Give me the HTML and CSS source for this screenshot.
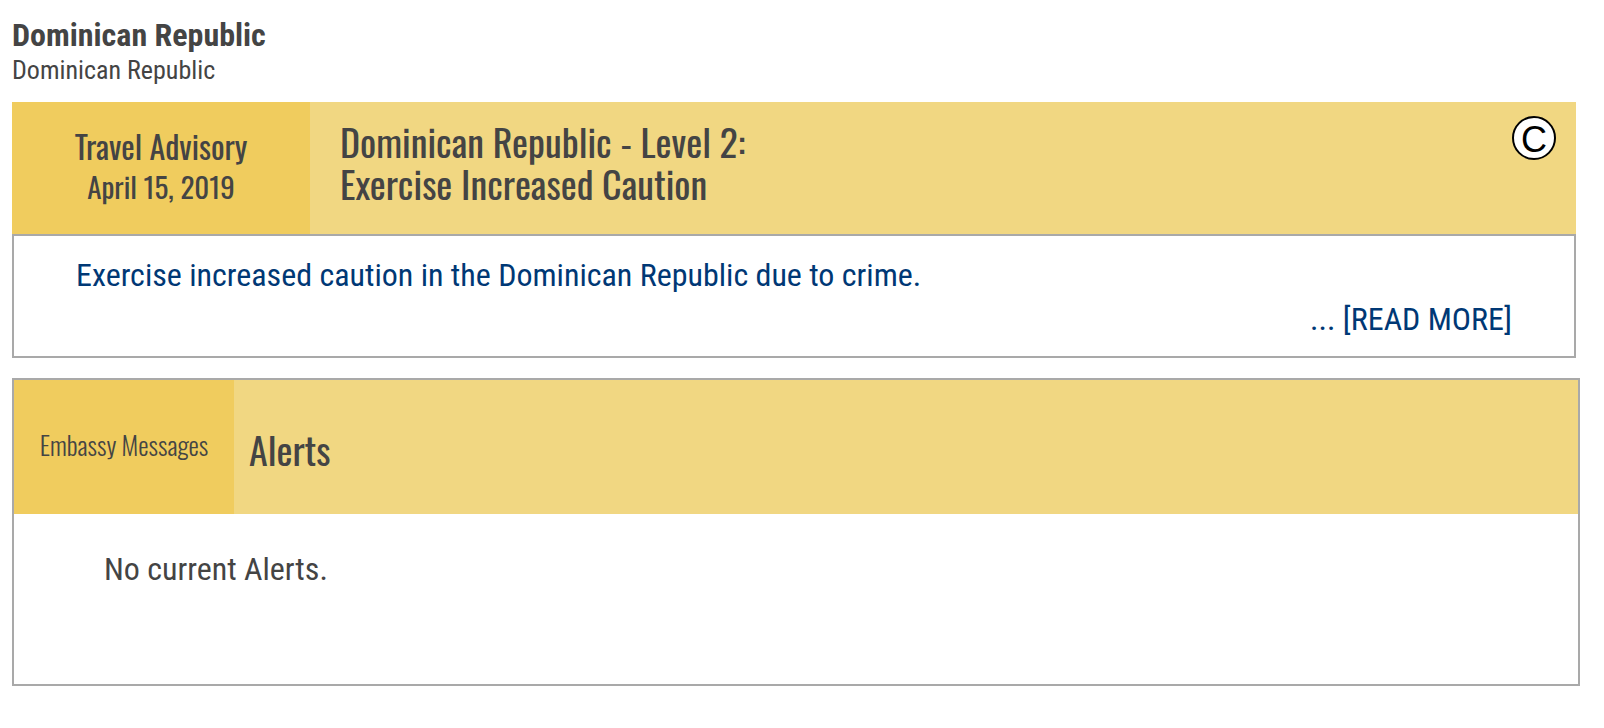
FILE: index.html
```html
<!DOCTYPE html>
<html lang="en">
<head>
  <meta charset="UTF-8" />
  <meta name="viewport" content="width=device-width, initial-scale=1.0" />
  <title>Dominican Republic</title>
  <link rel="stylesheet" href="styles.css">
</head>
<body>
  <header class="country">
    <h1 class="country-name">Dominican Republic</h1>
    <p class="country-full">Dominican Republic</p>
  </header>

  <section class="advisory">
    <div class="banner">
      <div class="banner-label advisory-label">
        <span class="advisory-type">Travel Advisory</span>
        <span class="advisory-date">April 15, 2019</span>
      </div>
      <h2 class="banner-title advisory-title">Dominican Republic - Level 2:<br>Exercise Increased Caution</h2>
      <button class="risk" type="button">C</button>
    </div>
    <div class="advisory-body">
      <a href="#advisory">Exercise increased caution in the Dominican Republic due to crime.</a>
      <a class="read-more" href="#advisory">... [READ MORE]</a>
    </div>
  </section>

  <section class="alerts">
    <div class="banner">
      <div class="banner-label alerts-label">Embassy Messages</div>
      <h2 class="banner-title alerts-title">Alerts</h2>
    </div>
    <p class="alerts-body">No current Alerts.</p>
  </section>
</body>
</html>
```

FILE: styles.css
```css
* {
  box-sizing: border-box;
}

body {
  margin: 0;
  padding: 16px 24px 42px 12px;
  background: #fff;
  color: #444;
  font-family: "Roboto Condensed", "Liberation Sans Narrow", Roboto, sans-serif;
  font-size: 32px;
  line-height: 44px;
}

h1,
h2,
p {
  margin: 0;
}

a {
  color: #003875;
  text-decoration: none;
}

.country {
  margin-bottom: 16px;
}

.country-name {
  font-size: 32px;
  line-height: 38px;
}

.country-full {
  font-size: 26px;
  line-height: 32px;
}

.banner {
  display: flex;
  background: #f1d782;
  font-family: Oswald, "Roboto Condensed", "Liberation Sans Narrow", Roboto, sans-serif;
}

.banner-label {
  display: flex;
  flex-direction: column;
  align-items: center;
  justify-content: center;
  padding-bottom: 4px;
  background: #f0cc5e;
}

.banner-title {
  flex: 1;
  font-size: 38px;
  font-weight: 400;
  line-height: 42px;
}

/* travel advisory */
.advisory {
  margin: 0 4px 20px 0;
}

.advisory .banner {
  min-height: 132px;
}

.advisory-label {
  width: 298px;
}

.advisory-type {
  font-size: 32px;
  line-height: 40px;
}

.advisory-date {
  font-size: 29px;
  line-height: 40px;
}

.advisory-title {
  padding: 18px 30px;
}

.risk {
  width: 44px;
  height: 44px;
  margin: 14px 20px 0 0;
  padding: 0;
  border: 2px solid #000;
  border-radius: 50%;
  background: #fff;
  color: #000;
  font: 36px/44px "Liberation Sans", Arial, sans-serif;
}

.advisory-body {
  display: flex;
  flex-direction: column;
  padding: 17px 62px 15px;
  border: 2px solid #a9a9a9;
}

.read-more {
  align-self: flex-end;
}

/* embassy alerts */
.alerts {
  border: 2px solid #a9a9a9;
}

.alerts .banner {
  min-height: 134px;
}

.alerts-label {
  width: 220px;
  font-size: 26px;
  font-weight: 300;
  line-height: 40px;
}

.alerts-title {
  align-self: center;
  padding: 4px 15px 0;
}

.alerts-body {
  min-height: 170px;
  padding: 33px 90px;
}
```
